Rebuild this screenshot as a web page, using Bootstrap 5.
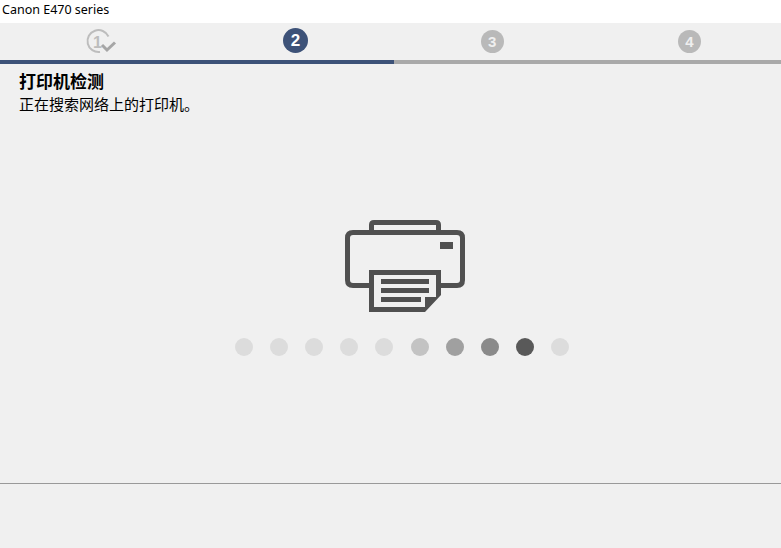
<!DOCTYPE html>
<html lang="zh-CN">
<head>
    <meta charset="UTF-8">
    <title>Canon E470 series</title>
    <link href="https://cdn.jsdelivr.net/npm/bootstrap@5.3.0/dist/css/bootstrap.min.css" rel="stylesheet">
    <style>
        html, body { height: 100%; }
        body { background: #f0f0f0; overflow: hidden; font-family: "Noto Sans CJK SC", sans-serif; color: #000; }
        .title-strip { height: 23px; background: #fff; padding-left: 2px; font: 12.5px/19px "Noto Sans", "Liberation Sans", sans-serif; }
        .step-row { height: 37px; width: 789px; }
        .step-cell { width: 197.25px; }
        .step-num { width: 23px; height: 23px; background: #b9b9b9; color: #efefef; font: bold 15px/23px "Liberation Sans", sans-serif; margin-left: -2px; }
        .step-num.now { width: 25px; height: 25px; background: #3d5278; color: #fff; font-size: 17px; line-height: 25px; margin: -2px 0 0 -1px; }
        .step-bar { height: 4px; border-radius: 0; background: #a9a9a9; }
        .step-bar .progress-bar { background: #3d5278; }
        .page-head { padding: 5px 0 0 19px; }
        .page-head h1 { font-size: 17px; font-weight: 700; line-height: 23px; margin: 0 0 2px; }
        .page-head p { font-size: 15px; line-height: 20px; margin: 0; }
        .printer-art { margin: 106px 0 0 345px; display: block; }
        .dot-row { gap: 17.17px; margin-top: 26px; margin-left: 23px; }
        .wait-dot { width: 18px; height: 18px; }
        .foot-strip { height: 65px; border-top: 1px solid #999; }
    </style>
</head>
<body class="d-flex flex-column">
    <div class="title-strip">Canon E470 series</div>

    <div class="overflow-hidden">
        <div class="step-row d-flex">
            <div class="step-cell d-flex justify-content-center pt-1">
                <svg width="36" height="28" viewBox="0 0 36 28">
                    <path d="M27.500 9.500 A11 11 0 1 0 19 25" fill="none" stroke="#bdbdbd" stroke-width="2"/>
                    <text x="16.500" y="20.500" text-anchor="middle" font-family="Liberation Sans" font-weight="700" font-size="16" fill="#bdbdbd">1</text>
                    <path d="M21 18 L26 23 L34 15.500" fill="none" stroke="#a6a6a6" stroke-width="3"/>
                </svg>
            </div>
            <div class="step-cell d-flex justify-content-center align-items-center"><div class="step-num now rounded-circle text-center">2</div></div>
            <div class="step-cell d-flex justify-content-center align-items-center"><div class="step-num rounded-circle text-center">3</div></div>
            <div class="step-cell d-flex justify-content-center align-items-center"><div class="step-num rounded-circle text-center">4</div></div>
        </div>
    </div>
    <div class="progress step-bar">
        <div class="progress-bar" style="width: 50.45%"></div>
    </div>

    <div class="flex-grow-1">
        <div class="page-head">
            <h1>打印机检测</h1>
            <p>正在搜索网络上的打印机。</p>
        </div>

        <svg class="printer-art" width="120" height="92" viewBox="345 220 120 92">
            <path d="M371.500 230 V225 Q371.500 222.500 374 222.500 H436 Q438.500 222.500 438.500 225 V230" fill="none" stroke="#505050" stroke-width="5"/>
            <path d="M369 285.500 H353 Q347.500 285.500 347.500 280 V238 Q347.500 232.500 353 232.500 H457 Q462.500 232.500 462.500 238 V280 Q462.500 285.500 457 285.500 H441" fill="none" stroke="#505050" stroke-width="5"/>
            <rect x="440" y="242" width="13" height="7" fill="#505050"/>
            <path fill="#505050" fill-rule="evenodd" d="M369 270 H441 V295 L425 312 H369 Z M374 275 V307 H425 V297 H436 V275 Z"/>
            <rect x="381" y="279" width="48" height="5" fill="#505050"/>
            <rect x="381" y="288" width="48" height="5" fill="#505050"/>
            <rect x="381" y="297" width="40" height="5" fill="#505050"/>
        </svg>

        <div class="dot-row d-flex justify-content-center" id="dots"></div>
    </div>

    <div class="foot-strip"></div>

    <script>
        // spinner frame as captured: one dark dot with a fading tail
        const shades = ['#dcdcdc','#dcdcdc','#dcdcdc','#dcdcdc','#dcdcdc','#c3c3c3','#a0a0a0','#8a8a8a','#595959','#dcdcdc'];
        const dots = document.getElementById('dots');
        shades.forEach(function(c) {
            const d = document.createElement('div');
            d.className = 'wait-dot rounded-circle';
            d.style.background = c;
            dots.appendChild(d);
        });
    </script>
    <script src="https://cdn.jsdelivr.net/npm/bootstrap@5.3.0/dist/js/bootstrap.bundle.min.js"></script>
</body>
</html>
